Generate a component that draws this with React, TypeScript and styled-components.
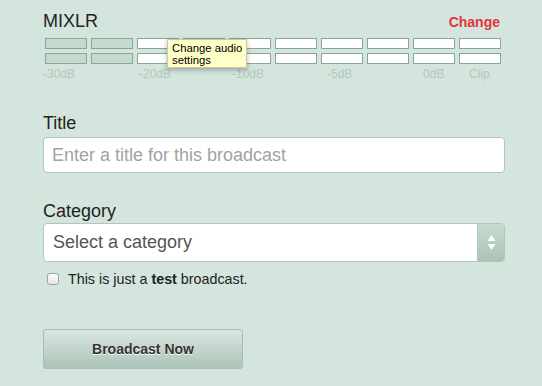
import React from "react";
import styled, { createGlobalStyle } from "styled-components";

const GlobalStyle = createGlobalStyle`
  html, body {
    margin: 0;
    padding: 0;
    background: #d3e5dc;
    font-family: "Liberation Sans", Arial, Helvetica, sans-serif;
  }
`;

const Page = styled.div`
  width: 462px;
  padding: 11px 0 0 43px;
  box-sizing: content-box;
`;

const Header = styled.div`
  display: flex;
  justify-content: space-between;
  align-items: baseline;
  height: 20px;
  padding-right: 5px;
`;

const Brand = styled.div`
  font-size: 18px;
  line-height: 20px;
  color: #222;
`;

const ChangeLink = styled.a`
  font-size: 14px;
  font-weight: bold;
  color: #e2353c;
  text-decoration: none;
  cursor: pointer;
`;

const MeterWrap = styled.div`
  position: relative;
  margin: 7px 0 0 2px;
`;

const MeterGrid = styled.div`
  display: grid;
  grid-template-columns: repeat(10, 42px);
  column-gap: 4px;
  row-gap: 4px;
`;

const Cell = styled.div<{ $on: boolean }>`
  height: 11px;
  box-sizing: border-box;
  border: 1px solid #8ba598;
  background: ${(p) => (p.$on ? "#c3dacf" : "#ffffff")};
`;

const LabelRow = styled.div`
  display: grid;
  grid-template-columns: repeat(10, 42px);
  column-gap: 4px;
  margin-top: 3px;
  height: 14px;
`;

const DbLabel = styled.span<{ $col: number; $shift: number }>`
  grid-column: ${(p) => p.$col};
  grid-row: 1;
  padding-left: ${(p) => Math.max(p.$shift, 0)}px;
  margin-left: ${(p) => Math.min(p.$shift, 0)}px;
  font-size: 12px;
  line-height: 14px;
  color: #b3c7bd;
  white-space: nowrap;
`;

const Tooltip = styled.div`
  position: absolute;
  left: 122px;
  top: 1px;
  width: 80px;
  height: 29px;
  box-sizing: border-box;
  padding: 2px 0 0 4px;
  background: #ffffc8;
  border: 1px solid #c9c9a4;
  box-shadow: 0 2px 5px rgba(0, 0, 0, 0.28);
  font-size: 11.3px;
  line-height: 12px;
  color: #000;
  z-index: 2;
`;

const FieldLabel = styled.div<{ $top: number }>`
  margin-top: ${(p) => p.$top}px;
  font-size: 18px;
  line-height: 20px;
  color: #222;
`;

const TextInput = styled.input`
  display: block;
  width: 462px;
  height: 36px;
  margin-top: 4px;
  box-sizing: border-box;
  border: 1px solid #b2c6bc;
  border-radius: 4px;
  padding: 0 8px;
  background: #fff;
  font-family: "Liberation Sans", Arial, sans-serif;
  font-size: 18px;
  color: #333;
  outline: none;
  &::placeholder {
    color: #a2a2a2;
  }
`;

const Select = styled.div`
  display: flex;
  width: 462px;
  height: 39px;
  margin-top: 2px;
  box-sizing: border-box;
  border: 1px solid #b2c6bc;
  border-radius: 4px;
  background: #fff;
  overflow: hidden;
`;

const SelectText = styled.div`
  flex: 1;
  display: flex;
  align-items: center;
  padding-left: 9px;
  font-size: 18px;
  color: #555;
`;

const SelectArrows = styled.div`
  width: 26px;
  display: flex;
  align-items: center;
  justify-content: center;
  border-left: 1px solid #b2c6bc;
  background: linear-gradient(#c8dad1, #abc3b7);
`;

const CheckRow = styled.label`
  display: flex;
  align-items: center;
  gap: 9px;
  margin: 9px 0 0 4px;
  font-size: 14.3px;
  line-height: 16px;
  color: #222;
`;

const Check = styled.input`
  appearance: none;
  margin: 0;
  width: 12px;
  height: 12px;
  border: 1px solid #a0a6a3;
  border-radius: 3px;
  background: linear-gradient(#fdfdfd, #e6e6e6);
  box-sizing: border-box;
`;

const Button = styled.button`
  display: block;
  margin-top: 42px;
  width: 200px;
  height: 40px;
  box-sizing: border-box;
  border: 1px solid #a8bdb2;
  border-radius: 3px;
  background: linear-gradient(#d8e6df, #adc4b9);
  font-family: "Liberation Sans", Arial, sans-serif;
  font-size: 14px;
  font-weight: bold;
  color: #333;
  text-shadow: 0 1px 0 #fff;
  cursor: pointer;
`;

const labels = [
  { text: "-30dB", col: 1, shift: -2 },
  { text: "-20dB", col: 3, shift: 2 },
  { text: "-10dB", col: 5, shift: 3 },
  { text: "-5dB", col: 7, shift: 6 },
  { text: "0dB", col: 9, shift: 10 },
  { text: "Clip", col: 10, shift: 10 },
];

export default function App() {
  const rows = [0, 1];
  return (
    <>
      <GlobalStyle />
      <Page>
        <Header>
          <Brand>MIXLR</Brand>
          <ChangeLink>Change</ChangeLink>
        </Header>
        <MeterWrap>
          <MeterGrid>
            {rows.map((r) =>
              Array.from({ length: 10 }).map((_, i) => (
                <Cell key={`${r}-${i}`} $on={i < 2} />
              ))
            )}
          </MeterGrid>
          <LabelRow>
            {labels.map((l) => (
              <DbLabel key={l.text} $col={l.col} $shift={l.shift}>
                {l.text}
              </DbLabel>
            ))}
          </LabelRow>
          <Tooltip>
            Change audio
            <br />
            settings
          </Tooltip>
        </MeterWrap>
        <FieldLabel $top={32}>Title</FieldLabel>
        <TextInput placeholder="Enter a title for this broadcast" />
        <FieldLabel $top={28}>Category</FieldLabel>
        <Select>
          <SelectText>Select a category</SelectText>
          <SelectArrows>
            <svg width="9" height="17" viewBox="0 0 9 17">
              <path d="M4.5 1 L8.5 7 L0.5 7 Z" fill="#fff" />
              <path d="M0.5 10 L8.5 10 L4.5 16 Z" fill="#fff" />
            </svg>
          </SelectArrows>
        </Select>
        <CheckRow>
          <Check type="checkbox" />
          <span>
            This is just a <b>test</b> broadcast.
          </span>
        </CheckRow>
        <Button>Broadcast Now</Button>
      </Page>
    </>
  );
}
